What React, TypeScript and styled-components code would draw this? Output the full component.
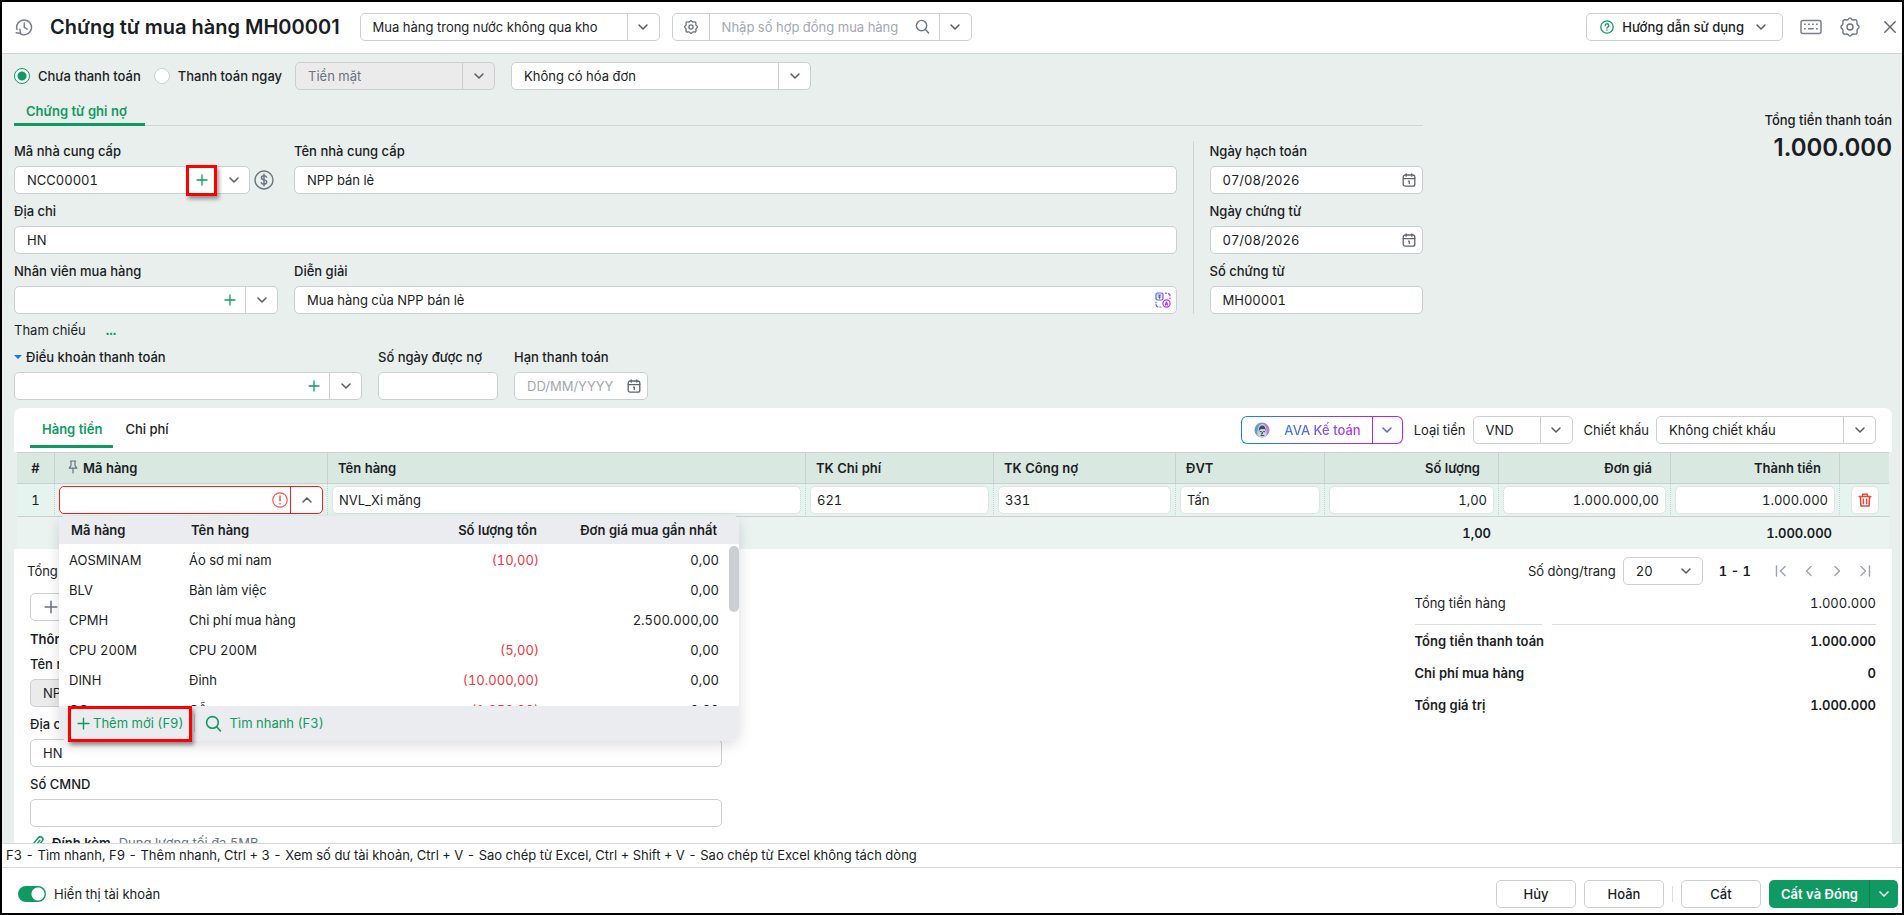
import React from "react";
import styled, { createGlobalStyle, css } from "styled-components";

const c = {
  text: "#1a1d24",
  muted: "#6b7280",
  placeholder: "#a3a7b0",
  border: "#cbced3",
  green: "#0f9a62",
  page: "#e9efed",
  head: "#d9e8e1",
  row: "#e5f4ef",
  foot: "#ebf3f1",
  red: "#f4211f",
  mark: "#ff0000",
};

const Global = createGlobalStyle`
  *, *::before, *::after { box-sizing: border-box; }
  body { margin: 0; background: ${c.page}; }
  body, button, input, select, table {
    font-family: Inter, "Liberation Sans", sans-serif;
    font-size: 13px;
    line-height: 20px;
    font-variant-numeric: tabular-nums;
    color: ${c.text};
  }
  button { padding: 0; border: 0; background: none; cursor: pointer; }
  a { text-decoration: none; }
`;

const Frame = styled.div`
  display: flex;
  flex-direction: column;
  height: 100vh;
  border: 2px solid #000;
  background: ${c.page};
`;

/* ---------- icons ---------- */

const Svg = styled.svg<{ $c?: string }>`
  display: block;
  flex: none;
  fill: none;
  stroke: ${(p) => p.$c || c.muted};
  stroke-linecap: round;
  stroke-linejoin: round;
`;

const Chevron = ({ up, color }: { up?: boolean; color?: string }) => (
  <Svg width="12" height="12" viewBox="0 0 12 12" strokeWidth="1.5" $c={color || "#555a63"}>
    <path d={up ? "M2 8l4-4 4 4" : "M2 4l4 4 4-4"} />
  </Svg>
);

const Plus = ({ size = 12, color = c.green }: { size?: number; color?: string }) => (
  <Svg width={size} height={size} viewBox="0 0 12 12" strokeWidth="1.3" $c={color}>
    <path d="M6 1v10M1 6h10" />
  </Svg>
);

const SearchIcon = ({ color, size = 16 }: { color?: string; size?: number }) => (
  <Svg width={size} height={size} viewBox="0 0 16 16" strokeWidth="1.5" $c={color}>
    <circle cx="7" cy="7" r="5.5" />
    <path d="M11.2 11.2L14.5 15" />
  </Svg>
);

const HistoryIcon = () => (
  <Svg width="18" height="18" viewBox="0 0 18 18" strokeWidth="1.5" $c="#7b7f8a">
    <path d="M5.2 15.6A7.4 7.4 0 1 0 2 11.5M1.2 14.8l4.3.6-.6-4.1" />
    <path d="M9.3 5v4.3l2.8 1.8" />
  </Svg>
);

const Gear = ({ size }: { size: number }) => (
  <Svg width={size} height={size} viewBox="0 0 20 20" strokeWidth={size > 15 ? 1.4 : 1.9}>
    <path d="M8.4 2.2Q10-.4 11.6 2.2 12.6 3.4 14 2.8 17 2.2 17 5 16.6 7 17.6 7.9 20.6 10 17.6 12 16.6 13 17.1 14.6 17.4 17.6 14.6 17.1 12.6 16.6 11.7 17.7 10 20.5 8.3 17.7 7.4 16.6 5.6 17.1 2.6 17.4 2.9 14.6 3.4 13 2.4 12.1-.6 10 2.4 7.9 3.4 7 2.9 5.2 2.7 2.4 5.6 2.8 7.3 3.4 8.4 2.2z" />
    <circle cx="10" cy="10" r="3" />
  </Svg>
);

const HelpIcon = () => (
  <Svg width="14" height="14" viewBox="0 0 14 14" strokeWidth="1.3" $c={c.green}>
    <circle cx="7" cy="7" r="6.2" />
    <path d="M5.2 5.6a1.8 1.8 0 1 1 2.6 1.6c-.6.3-.8.5-.8 1M7 10v.2" />
  </Svg>
);

const KeyboardIcon = () => (
  <Svg width="22" height="16" viewBox="0 0 22 16" strokeWidth="1.5" $c="#7b7f8a">
    <rect x="1" y="1.5" width="20" height="13" rx="2" />
    <path strokeWidth="1.6" strokeLinecap="butt" d="M4 5.3h1.8M8 5.3h1.8M12 5.3h1.8M16 5.3h1.8M4 9.8h1.8M8 9.8h5.8M16 9.8h1.8" />
  </Svg>
);

const CloseIcon = () => (
  <Svg width="12" height="12" viewBox="0 0 12 12" strokeWidth="1.4" $c="#5f636d">
    <path d="M.8.8l10.4 10.4M11.2.8L.8 11.2" />
  </Svg>
);

const CalendarIcon = () => (
  <Svg width="14" height="14" viewBox="0 0 14 14" strokeWidth="1.3" $c="#5f636d">
    <rect x="1.2" y="2" width="11.6" height="11.2" rx="2" />
    <path d="M1.2 5.6h11.6M4.2.8v2.4M9.8.8v2.4M6.5 8.2h.8v2.4" />
  </Svg>
);

const DollarIcon = () => (
  <Svg width="20" height="20" viewBox="0 0 20 20" strokeWidth="1.4">
    <circle cx="10" cy="10" r="9" />
    <path d="M12.6 7.2c-.5-1-1.4-1.4-2.6-1.4-1.5 0-2.6.7-2.6 2s1.1 1.8 2.6 2.1 2.7.8 2.7 2.2-1.2 2.1-2.7 2.1c-1.3 0-2.3-.5-2.7-1.5M10 4.2v11.6" />
  </Svg>
);

const TranslateIcon = () => (
  <Svg width="16" height="16" viewBox="0 0 16 16" strokeWidth="1.2" $c="url(#tg)">
    <defs>
      <linearGradient id="tg" x1="0" y1="0" x2="16" y2="10" gradientUnits="userSpaceOnUse">
        <stop offset="0" stopColor="#1f7cf5" />
        <stop offset="1" stopColor="#d020ec" />
      </linearGradient>
    </defs>
    <rect x="1" y="1" width="7" height="7" rx="1.5" />
    <path d="M3 3h3M3.2 5h2.6M4.5 3v3.2M10.5 1.2h1M13.5 1.6q1.5.6 1.5 2.2M15 5.8v.6M1 10v.8M1 12.6q.2 1.8 1.8 2.2M4.8 15h1" />
    <circle cx="11.5" cy="11.5" r="3.6" />
    <path d="M10.3 13l1.2-3 1.2 3M10.7 12.2h1.6" />
  </Svg>
);

const AvaIcon = () => (
  <svg width="16" height="16" viewBox="0 0 16 16">
    <defs>
      <linearGradient id="av" x1="0" y1="0" x2="1" y2="0">
        <stop offset="0" stopColor="#4fa3c7" />
        <stop offset="1" stopColor="#c27be0" />
      </linearGradient>
    </defs>
    <circle cx="8" cy="8" r="7.5" fill="url(#av)" />
    <path d="M3.6 14C3 9 4 2.2 8.2 2c4 0 4.6 5 4.3 11.5-2 2.3-6.5 2.5-8.9.5z" fill="#c9d3da" />
    <path d="M4.8 9C4.6 5.5 6.2 3.6 8.3 3.6s3.5 2 3.3 5.600L10.600 7H6.800z" fill="#3e4b5c" />
    <path d="M5.800 9.600h2M9 9.600h2M8.300 10v2H7M6.500 13.600h3.800" fill="none" stroke="#3e4b5c" strokeWidth="1" />
  </svg>
);

const PinIcon = () => (
  <Svg width="10" height="14" viewBox="0 0 10 14" strokeWidth="1.2">
    <path d="M2.5 1h5M3 1v4.500L1.200 8.200h7.600L7 5.500V1M5 8.500V13" />
  </Svg>
);

const AlertIcon = () => (
  <Svg width="16" height="16" viewBox="0 0 16 16" strokeWidth="1.2" $c="#f2554f">
    <circle cx="8" cy="8" r="7.2" />
    <path strokeWidth="1.5" d="M8 4v4.800M8 11.400v.3" />
  </Svg>
);

const TrashIcon = () => (
  <Svg width="14" height="14" viewBox="0 0 14 14" strokeWidth="1.5" $c="#f04438">
    <path d="M1.200 3.500h11.600M4.600 3.200V1.200h4.800v2M2.400 3.800l.5 9.200h8.200l.5-9.200M5.400 6.200v4.200M8.600 6.200v4.200" />
  </Svg>
);

const PageIcon = ({ d }: { d: string }) => (
  <Svg width="12" height="12" viewBox="0 0 12 12" strokeWidth="1.4" $c="#9ca0aa">
    <path d={d} />
  </Svg>
);

const ClipIcon = () => (
  <Svg width="14" height="16" viewBox="0 0 14 16" strokeWidth="1.5" $c={c.green}>
    <path d="M9.800 5.500L5.200 11a1.400 1.400 0 0 1-2.200-1.800l5.300-6.500a2.500 2.500 0 0 1 4 3.200L6.500 13a3.600 3.600 0 0 1-5-.5" />
  </Svg>
);

/* ---------- shared controls ---------- */

const Box = styled.div<{ $w?: string; $disabled?: boolean; $tone?: "light" | "error" }>`
  display: flex;
  align-items: stretch;
  flex: ${(p) => (p.$w ? "none" : "1 1 0")};
  width: ${(p) => p.$w || "auto"};
  min-width: 0;
  height: 28px;
  border: 1px solid ${(p) => (p.$tone === "error" ? c.red : p.$tone === "light" ? "#dfe3e4" : c.border)};
  border-radius: 5px;
  background: ${(p) => (p.$disabled ? "#ebebeb" : "#fff")};
`;

const inputCss = css<{ $pad?: number; $right?: boolean; $tight?: boolean }>`
  flex: 1 1 0;
  width: 100%;
  min-width: 0;
  height: 26px;
  padding: 0 ${(p) => (p.$tight ? 0 : p.$pad ?? 12)}px 0 ${(p) => p.$pad ?? 12}px;
  border: 0;
  outline: 0;
  background: transparent;
  text-align: ${(p) => (p.$right ? "right" : "left")};
`;
const TextInput = styled.input<{ $pad?: number; $right?: boolean; $tight?: boolean }>`
  ${inputCss}
  &::placeholder { color: ${c.placeholder}; opacity: 1; }
`;
const Select = styled.select<{ $pad?: number; $right?: boolean; $tight?: boolean }>`
  ${inputCss}
  appearance: none;
  opacity: 1;
  &:disabled { color: ${c.muted}; }
`;

const Arrow = styled.span<{ $w?: number; $line?: string }>`
  display: flex;
  align-items: center;
  justify-content: center;
  flex: none;
  width: ${(p) => p.$w ?? 32}px;
  border-left: 1px solid ${(p) => p.$line || c.border};
`;

const IconButton = styled.button<{ $w?: number; $gap?: number }>`
  position: relative;
  display: flex;
  align-items: center;
  justify-content: center;
  flex: none;
  width: ${(p) => (p.$w ? p.$w + "px" : "auto")};
  margin-right: ${(p) => p.$gap ?? 0}px;
`;

const ArrowButton = styled(IconButton)<{ $line?: string }>`
  border-left: 1px solid ${(p) => p.$line || c.border};
`;

const Marker = styled.span`
  position: absolute;
  inset: -2px 0 -3px 0;
  border: 3px solid ${c.mark};
  box-shadow: 2px 3px 4px rgba(0, 0, 0, 0.4);
  pointer-events: none;
`;

const SelectBox = (p: { label: string; value: string; w?: string; disabled?: boolean; noLine?: boolean; id?: string }) => (
  <Box $w={p.w} $disabled={p.disabled}>
    <Select id={p.id} aria-label={p.label} disabled={p.disabled}>
      <option>{p.value}</option>
    </Select>
    <Arrow $line={p.noLine ? "transparent" : undefined}>
      <Chevron />
    </Arrow>
  </Box>
);

/* ---------- header ---------- */

const Header = styled.header`
  display: flex;
  align-items: center;
  flex: none;
  height: 52px;
  padding: 0 6px 2px 13px;
  border-bottom: 1px solid #cfd5d4;
  background: #fff;
`;
const Title = styled.h1`
  margin: 0 20px 0 17px;
  font-size: 20px;
  line-height: 28px;
  font-weight: 600;
  font-variant-numeric: normal;
`;
const HeaderSelects = styled.div`
  display: flex;
  gap: 12px;
`;
const HeaderTools = styled.div`
  display: flex;
  align-items: center;
  margin-left: auto;
`;
const HelpButton = styled.button`
  display: flex;
  align-items: center;
  gap: 8px;
  height: 28px;
  margin-right: 17px;
  padding: 0 15px 0 13px;
  border: 1px solid ${c.border};
  border-radius: 5px;
  font-weight: 500;
  svg:last-child { margin-left: 3px; }
`;

/* ---------- form ---------- */

const Body = styled.main`
  display: flex;
  flex-direction: column;
  flex: 1 1 0;
  min-height: 0;
  overflow: hidden;
  padding: 8px 10px 0 12px;
`;
const PayRow = styled.div`
  display: flex;
  align-items: center;
  flex: none;
  height: 28px;
`;
const PaySelects = styled.div`
  display: flex;
  gap: 16px;
`;
const RadioLabel = styled.label`
  display: flex;
  align-items: center;
  gap: 8px;
  margin-right: 13px;
  font-weight: 500;
`;
const Radio = styled.input`
  appearance: none;
  width: 16px;
  height: 16px;
  margin: 0;
  border: 1px solid ${c.border};
  border-radius: 50%;
  background: #fff;
  &:checked {
    border: 1px solid ${c.green};
    background: radial-gradient(circle, ${c.green} 4px, #fff 5px);
  }
`;
const Split = styled.div`
  display: flex;
  justify-content: space-between;
  flex: none;
  margin-top: 7px;
`;
const FormArea = styled.div`
  width: 75%;
`;
const TotalBlock = styled.div`
  padding-top: 13px;
  text-align: right;
  font-weight: 500;
`;
const TotalValue = styled.div`
  font-size: 24px;
  line-height: 36px;
  font-weight: 600;
  font-variant-numeric: normal;
`;
const SubTabs = styled.div`
  display: flex;
  height: 29px;
  border-bottom: 1px solid #d0d6d5;
`;
const SubTab = styled.button`
  height: 29px;
  padding: 2px 18px 0 12px;
  border-bottom: 3px solid ${c.green};
  color: ${c.green};
  font-weight: 600;
`;
const Columns = styled.div`
  display: flex;
  margin-top: 15px;
`;
const Stack = styled.div`
  display: flex;
  flex-direction: column;
  gap: 7px;
  flex: 1 1 0;
  min-width: 0;
`;
const DateStack = styled(Stack)`
  flex: none;
  width: 230px;
  margin-left: 16px;
  padding-left: 16px;
  border-left: 1px solid #cfd5d4;
`;
const Row = styled.div`
  display: flex;
  gap: 16px;
`;
const FieldWrap = styled.div<{ $w?: string }>`
  display: flex;
  flex-direction: column;
  gap: 5px;
  flex: ${(p) => (p.$w ? "none" : "1 1 0")};
  width: ${(p) => p.$w || "auto"};
  min-width: 0;
  label { font-weight: 500; white-space: nowrap; }
`;
const Line = styled.div`
  display: flex;
  align-items: center;
`;
const Field = (p: { id: string; label: React.ReactNode; w?: string; children: React.ReactNode }) => (
  <FieldWrap $w={p.w}>
    <label htmlFor={p.id}>{p.label}</label>
    <Line>{p.children}</Line>
  </FieldWrap>
);
const IconSlot = styled(IconButton)`
  width: 26px;
`;
const RefRow = styled.div`
  display: flex;
  gap: 20px;
  flex: none;
  margin: 6px 0 7px;
  a { color: ${c.green}; font-weight: 700; }
`;
const Caret = styled.span`
  display: inline-block;
  margin: 0 4px 3px 0;
  border: 4px solid transparent;
  border-top-color: #1877f2;
  border-bottom: 0;
`;

/* ---------- detail card ---------- */

const Card = styled.section`
  display: flex;
  flex-direction: column;
  flex: 1 0 auto;
  margin-top: 8px;
  border-radius: 8px 8px 0 0;
  background: #fff;
`;
const CardHead = styled.div`
  display: flex;
  align-items: flex-start;
  height: 44px;
  padding: 0 16px;
`;
const Tab = styled.button<{ $on?: boolean }>`
  height: 40px;
  padding: 4px 11px 0 12px;
  border-bottom: 3px solid ${(p) => (p.$on ? c.green : "transparent")};
  color: ${(p) => (p.$on ? c.green : c.text)};
  font-weight: ${(p) => (p.$on ? 600 : 500)};
`;
const CardTools = styled.div`
  display: flex;
  align-items: center;
  margin: 8px 0 0 auto;
  label { margin: 0 7px 0 11px; }
`;
const Ava = styled.div`
  display: flex;
  height: 28px;
  border: 1px solid transparent;
  border-radius: 6px;
  background: linear-gradient(#fff, #fff) padding-box, linear-gradient(90deg, #1283fb, #c817f5) border-box;
`;
const AvaMain = styled.button`
  display: flex;
  align-items: center;
  gap: 14px;
  padding: 0 11px 0 12px;
  span {
    background: linear-gradient(90deg, #3b7cf0, #c02bf0);
    background-clip: text;
    color: transparent;
    font-weight: 500;
  }
`;

const TableWrap = styled.div`
  flex: none;
  padding: 0 3px;
  background: ${c.page};
`;
const Table = styled.table`
  width: 100%;
  table-layout: fixed;
  border-collapse: separate;
  border-spacing: 0;
`;
const Th = styled.th<{ $right?: boolean; $center?: boolean }>`
  height: 32px;
  padding: 0 ${(p) => (p.$right ? 18 : 10)}px 1px;
  border: solid ${c.border};
  border-width: 1px 0 1px ${(p) => (p.$center ? 0 : 1)}px;
  background: ${c.head};
  font-weight: 600;
  text-align: ${(p) => (p.$center ? "center" : p.$right ? "right" : "left")};
  svg { display: inline-block; vertical-align: -1px; margin: 0 5px 0 3px; }
`;
const Td = styled.td<{ $first?: boolean }>`
  height: 33px;
  padding: 0 4px;
  border-bottom: 1px solid ${c.border};
  border-left: ${(p) => (p.$first ? "0" : `1px dotted ${c.border}`)};
  background: ${c.row};
  text-align: ${(p) => (p.$first ? "center" : "left")};
`;
const Tf = styled.td`
  height: 32px;
  padding: 0 7px 1px;
  background: ${c.foot};
  font-weight: 600;
  text-align: right;
`;
const DeleteButton = styled.button`
  display: flex;
  align-items: center;
  justify-content: center;
  width: 28px;
  height: 28px;
  margin: 0 auto;
  border: 1px solid #dfe3e4;
  border-radius: 5px;
  background: #fff;
`;
const Anchor = styled.div`
  position: relative;
`;

/* ---------- item drop-down ---------- */

const Popup = styled.div`
  position: absolute;
  z-index: 5;
  top: 30px;
  left: 0;
  width: 680px;
  border-radius: 6px 6px 10px 10px;
  background: #fff;
  box-shadow: 0 4px 14px rgba(0, 0, 0, 0.14);
`;
const PopupScroll = styled.div`
  position: relative;
  height: 190px;
  overflow: hidden;
`;
const PopTable = styled(Table)`
  th, td { text-align: left; }
  th {
    height: 28px;
    padding: 0 12px 1px;
    background: #ebecef;
    font-weight: 600;
  }
  th:first-child { border-top-left-radius: 6px; }
  th:last-child { border-top-right-radius: 6px; padding-right: 22px; }
  td { height: 30px; padding: 0 10px; }
  td:last-child { padding-right: 20px; }
  th:nth-child(n + 3), td:nth-child(n + 3) { text-align: right; }
  td:nth-child(3) { color: #f0373c; }
  tbody::before { content: ""; display: table-row; height: 1px; }
`;
const Thumb = styled.div`
  position: absolute;
  top: 30px;
  right: 0;
  width: 10px;
  height: 66px;
  border-radius: 5px;
  background: #cbcfd4;
`;
const PopFoot = styled.div`
  display: flex;
  align-items: center;
  height: 35px;
  padding: 0 0 1px 9px;
  border-radius: 0 0 10px 10px;
  background: #ebecf0;
`;
const PopAction = styled.button<{ $first?: boolean }>`
  position: relative;
  display: flex;
  align-items: center;
  gap: ${(p) => (p.$first ? 3 : 8)}px;
  height: 31px;
  padding: ${(p) => (p.$first ? "0 8px 0 9px" : "0 0 0 10px")};
  color: ${c.green};
`;
const PopDivider = styled.span`
  width: 1px;
  height: 18px;
  margin-left: 2px;
  background: #c4c8cf;
`;

/* ---------- lower part ---------- */

const PagerRow = styled.div`
  display: flex;
  align-items: center;
  flex: none;
  height: 44px;
  padding: 0 15px 0 13px;
`;
const Pager = styled.div`
  display: flex;
  align-items: center;
  margin-left: auto;
  label { margin-right: 7px; }
`;
const PageRange = styled.span`
  margin: 0 18px 0 16px;
  font-weight: 600;
`;
const PageButtons = styled.div`
  display: flex;
  gap: 4px;
`;
const Lower = styled.div`
  display: flex;
  justify-content: space-between;
  padding: 0 16px;
`;
const LowerLeft = styled.div`
  width: 38%;
  max-width: 692px;
  h2 { margin: 8px 0 5px; font-size: 13px; line-height: 20px; font-weight: 600; }
`;
const AddRow = styled.button`
  display: flex;
  align-items: center;
  gap: 8px;
  height: 28px;
  padding: 0 13px;
  border: 1px solid ${c.border};
  border-radius: 5px;
`;
const Attach = styled.div`
  display: flex;
  align-items: center;
  gap: 8px;
  margin-top: 6px;
  b { font-weight: 600; }
  span { color: ${c.muted}; }
`;
const Summary = styled.div`
  width: 25%;
`;
const SumRow = styled.div<{ $line?: boolean }>`
  display: flex;
  gap: 10px;
  font-weight: ${(p) => (p.$line ? 400 : 600)};
  span {
    flex: none;
    width: 127px;
  }
  output {
    flex: 1;
    text-align: right;
  }
  span, output {
    padding: ${(p) => (p.$line ? "0 0 11px" : "6px 0")};
    border-bottom: ${(p) => (p.$line ? "1px solid #dadde0" : "0")};
    white-space: nowrap;
  }
`;

/* ---------- footer ---------- */

const Hints = styled.div`
  flex: none;
  height: 25px;
  padding: 1px 4px 0;
  border: solid #d5d8da;
  border-width: 1px 0;
  background: #fff;
`;
const Footer = styled.footer`
  display: flex;
  align-items: center;
  flex: none;
  height: 45px;
  padding: 7px 4px 0 16px;
  background: #fff;
`;
const SwitchLabel = styled.label`
  display: flex;
  align-items: center;
  gap: 8px;
  margin-right: auto;
`;
const Switch = styled.input`
  appearance: none;
  width: 28px;
  height: 16px;
  margin: 0;
  border-radius: 8px;
  background: radial-gradient(circle at 20px 8px, #fff 6px, ${c.green} 7px);
`;
const ActionButton = styled.button`
  width: 80px;
  height: 28px;
  margin-right: 8px;
  border: 1px solid ${c.border};
  border-radius: 5px;
  font-weight: 500;
`;
const FootDivider = styled.span`
  width: 1px;
  height: 16px;
  margin-right: 8px;
  background: #dcdfe2;
`;
const Primary = styled.div`
  display: flex;
  height: 28px;
  border-radius: 5px;
  background: ${c.green};
  button { color: #fff; font-weight: 600; }
  button:first-child { padding: 0 11px 0 12px; }
`;

const items = [
  ["AOSMINAM", "Áo sơ mi nam", "(10,00)", "0,00"],
  ["BLV", "Bàn làm việc", "", "0,00"],
  ["CPMH", "Chi phí mua hàng", "", "2.500.000,00"],
  ["CPU 200M", "CPU 200M", "(5,00)", "0,00"],
  ["DINH", "Đinh", "(10.000,00)", "0,00"],
  ["GO", "Gỗ", "(1.250,00)", "0,00"],
];

const columns: { label: string; w?: number; right?: boolean; value?: string }[] = [
  { label: "Tên hàng", value: "NVL_Xi măng" },
  { label: "TK Chi phí", w: 188, value: "621" },
  { label: "TK Công nợ", w: 182, value: "331" },
  { label: "ĐVT", w: 149, value: "Tấn" },
  { label: "Số lượng", w: 174, right: true, value: "1,00" },
  { label: "Đơn giá", w: 172, right: true, value: "1.000.000,00" },
  { label: "Thành tiền", w: 169, right: true, value: "1.000.000" },
];

const PlusCombo = (p: { id: string; value?: string; marked?: boolean }) => (
  <Box>
    <TextInput id={p.id} defaultValue={p.value} />
    <IconButton $w={31} aria-label="Thêm">
      <Plus />
      {p.marked && <Marker />}
    </IconButton>
    <ArrowButton $w={32} $line={p.marked ? "transparent" : undefined} aria-label="Mở danh sách">
      <Chevron />
    </ArrowButton>
  </Box>
);

const DateBox = (p: { id: string; value?: string }) => (
  <Box>
    <TextInput id={p.id} defaultValue={p.value} placeholder="DD/MM/YYYY" $tight />
    <IconSlot aria-label="Chọn ngày">
      <CalendarIcon />
    </IconSlot>
  </Box>
);

const ItemPopup = () => (
  <Popup>
    <PopupScroll>
      <PopTable>
        <colgroup>
          <col style={{ width: 120 }} />
          <col style={{ width: 200 }} />
          <col />
          <col style={{ width: 190 }} />
        </colgroup>
        <thead>
          <tr>
            <th>Mã hàng</th>
            <th>Tên hàng</th>
            <th>Số lượng tồn</th>
            <th>Đơn giá mua gần nhất</th>
          </tr>
        </thead>
        <tbody>
          {items.map((r) => (
            <tr key={r[0]}>
              {r.map((v, i) => (
                <td key={i}>{v}</td>
              ))}
            </tr>
          ))}
        </tbody>
      </PopTable>
      <Thumb />
    </PopupScroll>
    <PopFoot>
      <PopAction $first>
        <Plus size={13} />
        Thêm mới (F9)
        <Marker />
      </PopAction>
      <PopDivider />
      <PopAction>
        <SearchIcon color={c.green} size={17} />
        Tìm nhanh (F3)
      </PopAction>
    </PopFoot>
  </Popup>
);

export default function App() {
  return (
    <Frame>
      <Global />
      <Header>
        <IconButton aria-label="Lịch sử">
          <HistoryIcon />
        </IconButton>
        <Title>Chứng từ mua hàng MH00001</Title>
        <HeaderSelects>
          <SelectBox label="Loại chứng từ" value="Mua hàng trong nước không qua kho" w="300px" />
          <Box $w="300px">
            <IconButton $w={36} aria-label="Thiết lập tìm kiếm">
              <Gear size={14} />
            </IconButton>
            <Arrow $w={1} />
            <TextInput aria-label="Số hợp đồng mua hàng" placeholder="Nhập số hợp đồng mua hàng" $tight />
            <IconButton $w={32} aria-label="Tìm kiếm">
              <SearchIcon size={15} />
            </IconButton>
            <ArrowButton $w={32} aria-label="Mở danh sách">
              <Chevron />
            </ArrowButton>
          </Box>
        </HeaderSelects>
        <HeaderTools>
          <HelpButton>
            <HelpIcon />
            Hướng dẫn sử dụng
            <Chevron />
          </HelpButton>
          <IconButton $gap={18} aria-label="Phím tắt">
            <KeyboardIcon />
          </IconButton>
          <IconButton $gap={24} aria-label="Thiết lập">
            <Gear size={20} />
          </IconButton>
          <IconButton aria-label="Đóng">
            <CloseIcon />
          </IconButton>
        </HeaderTools>
      </Header>

      <Body>
        <PayRow>
          <RadioLabel>
            <Radio type="radio" name="pay" defaultChecked />
            Chưa thanh toán
          </RadioLabel>
          <RadioLabel>
            <Radio type="radio" name="pay" />
            Thanh toán ngay
          </RadioLabel>
          <PaySelects>
            <SelectBox label="Hình thức thanh toán" value="Tiền mặt" w="200px" disabled />
            <SelectBox label="Hóa đơn" value="Không có hóa đơn" w="300px" />
          </PaySelects>
        </PayRow>

        <Split>
          <FormArea>
            <SubTabs>
              <SubTab>Chứng từ ghi nợ</SubTab>
            </SubTabs>
            <Columns>
              <Stack>
                <Row>
                  <Field id="supplier" label="Mã nhà cung cấp" w="264px">
                    <PlusCombo id="supplier" value="NCC00001" marked />
                    <IconButton $w={28} aria-label="Công nợ">
                      <DollarIcon />
                    </IconButton>
                  </Field>
                  <Field id="supplierName" label="Tên nhà cung cấp">
                    <Box>
                      <TextInput id="supplierName" defaultValue="NPP bán lẻ" />
                    </Box>
                  </Field>
                </Row>
                <Field id="address" label="Địa chỉ">
                  <Box>
                    <TextInput id="address" defaultValue="HN" />
                  </Box>
                </Field>
                <Row>
                  <Field id="buyer" label="Nhân viên mua hàng" w="264px">
                    <PlusCombo id="buyer" />
                  </Field>
                  <Field id="note" label="Diễn giải">
                    <Box>
                      <TextInput id="note" defaultValue="Mua hàng của NPP bán lẻ" />
                      <IconSlot aria-label="Dịch">
                        <TranslateIcon />
                      </IconSlot>
                    </Box>
                  </Field>
                </Row>
              </Stack>
              <DateStack>
                <Field id="postDate" label="Ngày hạch toán">
                  <DateBox id="postDate" value="07/08/2026" />
                </Field>
                <Field id="docDate" label="Ngày chứng từ">
                  <DateBox id="docDate" value="07/08/2026" />
                </Field>
                <Field id="docNo" label="Số chứng từ">
                  <Box>
                    <TextInput id="docNo" defaultValue="MH00001" />
                  </Box>
                </Field>
              </DateStack>
            </Columns>
            <RefRow>
              Tham chiếu <a href="#reference">...</a>
            </RefRow>
            <Row>
              <Field
                id="terms"
                w="348px"
                label={
                  <>
                    <Caret />
                    Điều khoản thanh toán
                  </>
                }
              >
                <PlusCombo id="terms" />
              </Field>
              <Field id="days" label="Số ngày được nợ" w="120px">
                <Box>
                  <TextInput id="days" />
                </Box>
              </Field>
              <Field id="due" label="Hạn thanh toán" w="134px">
                <DateBox id="due" />
              </Field>
            </Row>
          </FormArea>
          <TotalBlock>
            Tổng tiền thanh toán
            <TotalValue>1.000.000</TotalValue>
          </TotalBlock>
        </Split>

        <Card>
          <CardHead>
            <Tab $on>Hàng tiền</Tab>
            <Tab>Chi phí</Tab>
            <CardTools>
              <Ava>
                <AvaMain>
                  <AvaIcon />
                  <span>AVA Kế toán</span>
                </AvaMain>
                <ArrowButton $w={30} $line="#a42cf5" aria-label="Tùy chọn AVA">
                  <Chevron color="#5a5cf5" />
                </ArrowButton>
              </Ava>
              <label htmlFor="currency">Loại tiền</label>
              <SelectBox id="currency" label="Loại tiền" value="VND" w="100px" />
              <label htmlFor="discount">Chiết khấu</label>
              <SelectBox id="discount" label="Chiết khấu" value="Không chiết khấu" w="220px" />
            </CardTools>
          </CardHead>

          <TableWrap>
            <Table>
              <colgroup>
                <col style={{ width: 37 }} />
                <col style={{ width: 273 }} />
                {columns.map((k) => (
                  <col key={k.label} style={{ width: k.w }} />
                ))}
                <col style={{ width: 50 }} />
              </colgroup>
              <thead>
                <tr>
                  <Th $center>#</Th>
                  <Th>
                    <PinIcon />
                    Mã hàng
                  </Th>
                  {columns.map((k) => (
                    <Th key={k.label} $right={k.right}>
                      {k.label}
                    </Th>
                  ))}
                  <Th />
                </tr>
              </thead>
              <tbody>
                <tr>
                  <Td $first>1</Td>
                  <Td>
                    <Anchor>
                      <Box $tone="error">
                        <TextInput aria-label="Mã hàng" $pad={6} />
                        <IconButton $w={20} aria-label="Lỗi">
                          <AlertIcon />
                        </IconButton>
                        <ArrowButton $w={32} $line={c.red} aria-label="Đóng danh sách">
                          <Chevron up />
                        </ArrowButton>
                      </Box>
                      <ItemPopup />
                    </Anchor>
                  </Td>
                  {columns.map((k) => (
                    <Td key={k.label}>
                      <Box $tone="light">
                        <TextInput aria-label={k.label} defaultValue={k.value} $right={k.right} $pad={6} />
                      </Box>
                    </Td>
                  ))}
                  <Td>
                    <DeleteButton aria-label="Xóa dòng">
                      <TrashIcon />
                    </DeleteButton>
                  </Td>
                </tr>
              </tbody>
              <tfoot>
                <tr>
                  <Tf colSpan={6} />
                  <Tf>1,00</Tf>
                  <Tf />
                  <Tf>1.000.000</Tf>
                  <Tf />
                </tr>
              </tfoot>
            </Table>
          </TableWrap>

          <PagerRow>
            Tổng
            <Pager>
              <label htmlFor="pageSize">Số dòng/trang</label>
              <SelectBox id="pageSize" label="Số dòng/trang" value="20" w="80px" noLine />
              <PageRange>1 - 1</PageRange>
              <PageButtons>
                <IconButton $w={24} aria-label="Trang đầu">
                  <PageIcon d="M1.500 1v10M10 1.500L5.500 6l4.500 4.500" />
                </IconButton>
                <IconButton $w={24} aria-label="Trang trước">
                  <PageIcon d="M8 1.500L3.500 6 8 10.500" />
                </IconButton>
                <IconButton $w={24} aria-label="Trang sau">
                  <PageIcon d="M4 1.500L8.500 6 4 10.500" />
                </IconButton>
                <IconButton $w={24} aria-label="Trang cuối">
                  <PageIcon d="M2 1.500L6.500 6 2 10.500M10.500 1v10" />
                </IconButton>
              </PageButtons>
            </Pager>
          </PagerRow>

          <Lower>
            <LowerLeft>
              <AddRow>
                <Plus size={14} color={c.muted} />
                Thêm dòng
              </AddRow>
              <h2>Thông tin</h2>
              <Stack>
                <Field id="n2" label="Tên nhà cung cấp">
                  <Box $disabled>
                    <TextInput id="n2" defaultValue="NPP bán lẻ" readOnly />
                  </Box>
                </Field>
                <Field id="a2" label="Địa chỉ">
                  <Box>
                    <TextInput id="a2" defaultValue="HN" />
                  </Box>
                </Field>
                <Field id="idNo" label="Số CMND">
                  <Box>
                    <TextInput id="idNo" />
                  </Box>
                </Field>
              </Stack>
              <Attach>
                <ClipIcon />
                <b>Đính kèm</b>
                <span>Dung lượng tối đa 5MB</span>
              </Attach>
            </LowerLeft>
            <Summary>
              <SumRow $line>
                <span>Tổng tiền hàng</span>
                <output>1.000.000</output>
              </SumRow>
              <SumRow>
                <span>Tổng tiền thanh toán</span>
                <output>1.000.000</output>
              </SumRow>
              <SumRow>
                <span>Chi phí mua hàng</span>
                <output>0</output>
              </SumRow>
              <SumRow>
                <span>Tổng giá trị</span>
                <output>1.000.000</output>
              </SumRow>
            </Summary>
          </Lower>
        </Card>
      </Body>

      <Hints>
        F3 - Tìm nhanh, F9 - Thêm nhanh, Ctrl + 3 - Xem số dư tài khoản, Ctrl + V - Sao chép từ Excel, Ctrl + Shift + V - Sao chép
        từ Excel không tách dòng
      </Hints>
      <Footer>
        <SwitchLabel>
          <Switch type="checkbox" role="switch" defaultChecked />
          Hiển thị tài khoản
        </SwitchLabel>
        <ActionButton>Hủy</ActionButton>
        <ActionButton>Hoãn</ActionButton>
        <FootDivider />
        <ActionButton>Cất</ActionButton>
        <Primary>
          <button>Cất và Đóng</button>
          <ArrowButton $w={29} $line="#0b7d4f" aria-label="Tùy chọn cất">
            <Chevron color="#fff" />
          </ArrowButton>
        </Primary>
      </Footer>
    </Frame>
  );
}
